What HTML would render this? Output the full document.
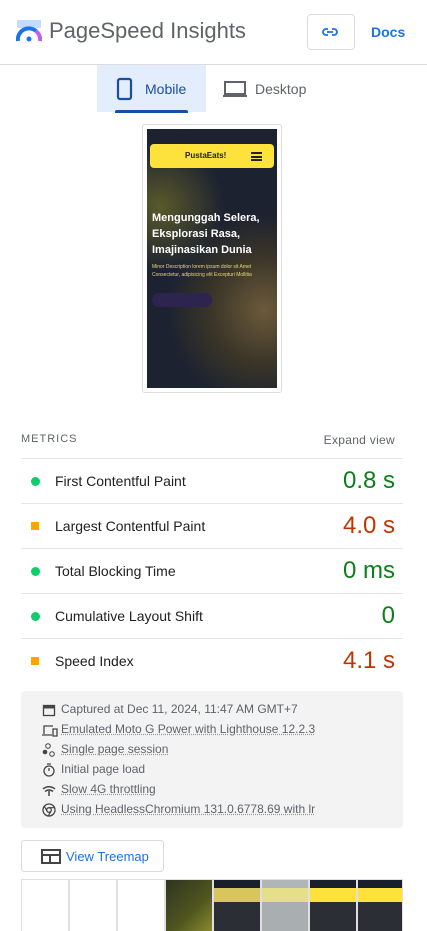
<!DOCTYPE html>
<html><head><meta charset="utf-8"><style>
*{box-sizing:border-box;margin:0;padding:0}
body{width:427px;height:931px;overflow:hidden;background:#fff;font-family:"Liberation Sans",Arial,sans-serif;position:relative;color:#212121}
.a{position:absolute}
.hdr{top:0;left:0;width:427px;height:65px;border-bottom:1px solid #dadce0}
.row{position:absolute;left:21px;width:382px;height:45px;border-top:1px solid #e6e6e6;font-size:14px}
.row .lbl{position:absolute;left:34px;top:14px;color:#212121}
.row .v{position:absolute;right:8px;top:8px;font-size:24px}
.g{color:#0c7f1a}.r{color:#c33300}
.dot{position:absolute;left:10px;top:18px;width:9px;height:9px;border-radius:50%;background:#0cce6b}
.sq{position:absolute;left:10px;top:18px;width:8px;height:8px;background:#ffa400}
.meta{left:21px;top:691px;width:382px;height:137px;background:#f3f3f3;border-radius:4px;font-size:12px;color:#5f6368}
.meta div{position:absolute;left:40px;white-space:nowrap}
.meta .u{text-decoration:underline dotted #999}
.meta svg{position:absolute;left:-19px;top:1px}
.cell{position:absolute;top:879px;width:48px;height:52px;border:1px solid #e0e0e0;border-bottom:none}
</style></head><body>
<div class="a hdr"></div>
<svg class="a" style="left:16px;top:19px" width="26" height="24" viewBox="0 0 26 24"><rect x="1" y="1" width="24" height="8" rx="1" fill="#c2dbff"/><path d="M2 22 A11 11 0 0 1 20 12" stroke="#1a73e8" stroke-width="4" fill="none"/><path d="M20 12 A11 11 0 0 1 24 22" stroke="#c45cf0" stroke-width="4" fill="none"/><circle cx="13" cy="20" r="2.5" fill="#1a73e8"/></svg>
<div class="a" style="left:49px;top:18px;font-size:22px;color:#5f6368">PageSpeed Insights</div>
<div class="a" style="left:307px;top:14px;width:48px;height:36px;border:1px solid #dadce0;border-radius:4px"></div>
<svg class="a" style="left:322px;top:26px" width="16" height="12" viewBox="0 0 16 12"><path d="M6 3H4a3 3 0 0 0 0 6h2M10 3h2a3 3 0 0 1 0 6h-2M5 6h6" stroke="#1a73e8" stroke-width="1.8" fill="none"/></svg>
<div class="a" style="left:371px;top:24px;font-size:14px;color:#1a73e8;font-weight:bold">Docs</div>
<div class="a" style="left:97px;top:65px;width:109px;height:47px;background:#e3edfb"></div>
<div class="a" style="left:115px;top:110px;width:73px;height:3px;background:#174ea6;border-radius:2px 2px 0 0"></div>
<svg class="a" style="left:116px;top:77px" width="18" height="24" viewBox="0 0 18 24"><rect x="2" y="2" width="13" height="20" rx="2" stroke="#174ea6" stroke-width="2.2" fill="none"/></svg>
<div class="a" style="left:145px;top:81px;font-size:14px;color:#174ea6">Mobile</div>
<svg class="a" style="left:223px;top:80px" width="24" height="18" viewBox="0 0 24 18"><rect x="2" y="2" width="20" height="12" stroke="#5f6368" stroke-width="2" fill="none"/><rect x="0" y="15" width="24" height="2" fill="#5f6368"/></svg>
<div class="a" style="left:255px;top:81px;font-size:14px;color:#5f6368">Desktop</div>
<div class="a" style="left:142px;top:124px;width:140px;height:269px;border:1px solid #ddd;border-radius:3px"></div>
<div class="a" style="left:147px;top:129px;width:130px;height:259px;background:radial-gradient(circle at 90% 70%,#6b5a3a 0,#3a3528 25%,transparent 45%),radial-gradient(circle at 10% 30%,#5a5a2a 0,transparent 30%),#1c2230"></div>
<div class="a" style="left:150px;top:144px;width:124px;height:24px;background:#fde23c;border-radius:4px"></div>
<div class="a" style="left:185px;top:151px;font-size:8px;font-weight:bold;color:#222">PustaEats!</div>
<div class="a" style="left:251px;top:152px;width:11px;height:9px;border-top:2px solid #222;border-bottom:2px solid #222"></div>
<div class="a" style="left:251px;top:156px;width:11px;height:1.5px;background:#222"></div>
<div class="a" style="left:152px;top:210px;font-size:11px;font-weight:bold;color:#fff;line-height:16px;width:125px">Mengunggah Selera, Eksplorasi Rasa, Imajinasikan Dunia</div>
<div class="a" style="left:152px;top:263px;font-size:5px;color:#e8d77a;line-height:8px;width:122px">Minor Description lorem ipsum dolor sit Amet Consectetur, adipisicing elit Excepturi Mollitia</div>
<div class="a" style="left:152px;top:293px;width:60px;height:14px;background:#2d2450;border-radius:7px"></div>
<div class="a" style="left:21px;top:433px;font-size:11px;letter-spacing:1px;color:#5f6368">METRICS</div>
<div class="a" style="right:32px;top:433px;font-size:12px;color:#5f6368;letter-spacing:0.3px">Expand view</div>
<div class="row" style="top:458px"><span class="dot"></span><span class="lbl">First Contentful Paint</span><span class="v g">0.8 s</span></div>
<div class="row" style="top:503px"><span class="sq"></span><span class="lbl">Largest Contentful Paint</span><span class="v r">4.0 s</span></div>
<div class="row" style="top:548px"><span class="dot"></span><span class="lbl">Total Blocking Time</span><span class="v g">0 ms</span></div>
<div class="row" style="top:593px"><span class="dot"></span><span class="lbl">Cumulative Layout Shift</span><span class="v g">0</span></div>
<div class="row" style="top:638px"><span class="sq"></span><span class="lbl">Speed Index</span><span class="v r">4.1 s</span></div>
<div class="a meta">
<div style="top:11px"><svg width="14" height="14" viewBox="0 0 14 14"><rect x="1.5" y="2.5" width="11" height="10" stroke="#444" stroke-width="1.3" fill="none"/><rect x="1.5" y="2.5" width="11" height="3" fill="#444"/></svg>Captured at Dec 11, 2024, 11:47 AM GMT+7</div>
<div style="top:31px" class="u"><svg width="16" height="14" viewBox="0 0 16 14"><path d="M2 11V3h9M0 12h10M11 6h4v7h-4z" stroke="#444" stroke-width="1.3" fill="none"/></svg>Emulated Moto G Power with Lighthouse 12.2.3</div>
<div style="top:51px" class="u"><svg width="14" height="14" viewBox="0 0 14 14"><circle cx="6" cy="3" r="2.3" stroke="#444" fill="none"/><circle cx="3" cy="9" r="2.3" fill="#444"/><circle cx="10" cy="11" r="2.3" stroke="#444" fill="none"/></svg>Single page session</div>
<div style="top:71px"><svg width="14" height="14" viewBox="0 0 14 14"><circle cx="7" cy="8" r="5" stroke="#444" stroke-width="1.3" fill="none"/><path d="M5 1h4M7 8V5" stroke="#444" stroke-width="1.3"/></svg>Initial page load</div>
<div style="top:91px" class="u"><svg width="14" height="14" viewBox="0 0 14 14"><path d="M1 6a9 9 0 0 1 12 0M3 8.5a6 6 0 0 1 8 0M7 8v5" stroke="#444" stroke-width="1.5" fill="none"/></svg>Slow 4G throttling</div>
<div style="top:111px" class="u"><svg width="14" height="14" viewBox="0 0 14 14"><circle cx="7" cy="7" r="6" stroke="#444" stroke-width="1.3" fill="none"/><circle cx="7" cy="7" r="2.3" stroke="#444" stroke-width="1.3" fill="none"/><path d="M7 4.7h5.5M5 8l-2.5-4.5M9 8.2l-2.7 4.6" stroke="#444" stroke-width="1.2"/></svg>Using HeadlessChromium 131.0.6778.69 with lr</div>
</div>
<div class="a" style="left:21px;top:840px;width:143px;height:32px;border:1px solid #dadce0;border-radius:3px"></div>
<svg class="a" style="left:41px;top:849px" width="20" height="15" viewBox="0 0 20 15"><rect x="1" y="1" width="18" height="13" stroke="#444" stroke-width="2" fill="none"/><path d="M1 6h18M9 6v8" stroke="#444" stroke-width="2"/></svg>
<div class="a" style="left:66px;top:849px;font-size:13px;color:#1a73e8">View Treemap</div>
<div class="cell" style="left:21px"></div><div class="cell" style="left:69px"></div><div class="cell" style="left:117px"></div>
<div class="cell" style="left:165px;background:linear-gradient(135deg,#2e3320,#50561f 60%,#8a8a30)"></div>
<div class="cell" style="left:213px;background:linear-gradient(#1a1f2c 0 8px,#d8c65c 8px 22px,#2b2e35 22px)"></div>
<div class="cell" style="left:261px;background:linear-gradient(#b0b6b8 0 8px,#e5df8a 8px 22px,#a9aeb0 22px)"></div>
<div class="cell" style="left:309px;background:linear-gradient(#1a1f2c 0 8px,#fde23c 8px 22px,#2b2e35 22px)"></div>
<div class="cell" style="left:357px;width:46px;background:linear-gradient(#1a1f2c 0 8px,#fde23c 8px 22px,#2b2e35 22px)"></div>
</body></html>
